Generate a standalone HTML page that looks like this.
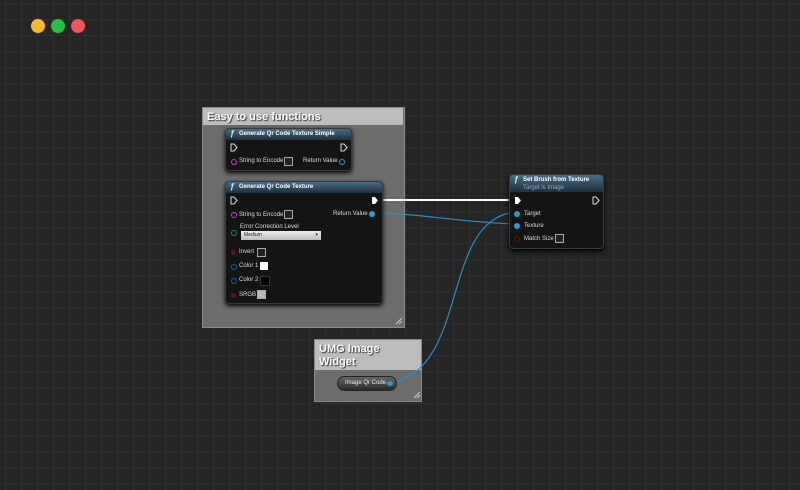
<!DOCTYPE html><html><head><style>
body{margin:0;width:800px;height:490px;overflow:hidden;background:#252525;font-family:"Liberation Sans",sans-serif;position:relative;
background-image:linear-gradient(#2e2e2e 1px,transparent 1px),linear-gradient(90deg,#2e2e2e 1px,transparent 1px);background-size:16px 16px;background-position:5px 3px}
.a{position:absolute}
.dot{width:14px;height:14px;border-radius:50%;top:19px}
.cm{background:#6c6c6c;border:1px solid #8a8a8a}
.ch{background:#bcbcbc;color:#fff;font-weight:bold;text-shadow:1px 1px 1px #333}
.node{background:#141414;border:1px solid #3a3a3a;border-radius:4px;box-shadow:0 2px 4px #000;font-size:6px;color:#ddd}
.nh{background:linear-gradient(#4a6c88,#1d2f3e);height:11px;border-radius:3px 3px 0 0;color:#fff;font-weight:bold;font-size:6px;padding-left:13px;line-height:10px;position:relative}
.nh:before{content:"ƒ";position:absolute;left:4px;top:0;font-style:italic;color:#cfe;font-size:8px}
.pin{width:5px;height:5px;border-radius:50%;position:absolute}
.cb{position:absolute;width:7px;height:7px;border:1px solid #aaa;background:#222}
.t{line-height:9px}
</style></head><body>
<div class="a dot" style="left:31px;background:#fbb82d"></div>
<div class="a dot" style="left:51px;background:#24c146"></div>
<div class="a dot" style="left:71px;background:#f05454"></div>

<div class="a cm" style="left:202px;top:107px;width:201px;height:219px"></div>
<div class="a ch" style="left:203px;top:108px;width:200px;height:17px;font-size:11px;line-height:18px;padding-left:4px;box-sizing:border-box">Easy to use functions</div>

<div class="a cm" style="left:314px;top:339px;width:106px;height:61px"></div>
<div class="a ch" style="left:315px;top:340px;width:106px;height:30px;font-size:11px;line-height:13px;padding:3px 4px;box-sizing:border-box">UMG Image<br>Widget</div>

<svg class="a" style="left:0;top:0" width="800" height="490">
<line x1="376" y1="200" x2="513" y2="200" stroke="#fff" stroke-width="2"/>
<path d="M372 212 C430 215,460 222,515 224" stroke="#2a8fc4" stroke-width="1.2" fill="none"/>
<path d="M390 383 C470 370,440 220,515 212" stroke="#2a8fc4" stroke-width="1.2" fill="none"/>
<path d="M396 324 L402 318 M399 324 L402 321" stroke="#ccc" stroke-width="1"/>
<path d="M414 398 L420 392 M417 398 L420 395" stroke="#ccc" stroke-width="1"/>
</svg>

<div class="a node" style="left:225px;top:128px;width:125px;height:41px">
<div class="nh">Generate Qr Code Texture Simple</div>
<svg class="a" style="left:4px;top:14px" width="120" height="10"><path d="M1 1H4L7 4.5L4 8H1Z" stroke="#ddd" fill="none"/><path d="M111 1H114L117 4.5L114 8H111Z" stroke="#ddd" fill="none"/></svg>
<div class="pin" style="left:5px;top:30px;border:1px solid #d23bd2;width:4px;height:4px"></div>
<div class="a t" style="left:13px;top:28px">String to Encode</div><div class="cb" style="left:58px;top:28px"></div>
<div class="a t" style="left:77px;top:28px">Return Value</div>
<div class="pin" style="left:113px;top:30px;border:1px solid #2a9ad8;width:4px;height:4px"></div>
</div>

<div class="a node" style="left:225px;top:181px;width:156px;height:121px">
<div class="nh">Generate Qr Code Texture</div>
<svg class="a" style="left:4px;top:14px" width="150" height="10"><path d="M1 1H4L7 4.5L4 8H1Z" stroke="#ddd" fill="none"/><path d="M142 1H145L148 4.5L145 8H142Z" fill="#fff"/></svg>
<div class="pin" style="left:5px;top:30px;border:1px solid #d23bd2;width:4px;height:4px"></div>
<div class="a t" style="left:13px;top:29px">String to Encode</div><div class="cb" style="left:58px;top:28px"></div>
<div class="a t" style="left:107px;top:28px">Return Value</div>
<div class="pin" style="left:143px;top:29px;background:#2a9ad8;width:6px;height:6px"></div>
<div class="pin" style="left:5px;top:48px;border:1px solid #1a8a6a;width:4px;height:4px"></div>
<div class="a t" style="left:14px;top:41px">Error Correction Level</div>
<div class="a" style="left:15px;top:49px;width:80px;height:9px;background:linear-gradient(#eee,#bbb);color:#222;font-size:5px;line-height:9px;padding-left:3px;box-sizing:border-box">Medium<span style="float:right;margin-right:3px">▾</span></div>
<div class="pin" style="left:5px;top:68px;background:#6a1010"></div><div class="a t" style="left:13px;top:66px">Invert</div><div class="cb" style="left:31px;top:66px"></div>
<div class="pin" style="left:5px;top:82px;border:1px solid #1a5aa8;width:4px;height:4px"></div><div class="a t" style="left:13px;top:80px">Color 1</div><div class="a" style="left:34px;top:80px;width:8px;height:8px;background:#fff"></div>
<div class="pin" style="left:5px;top:96px;border:1px solid #1a5aa8;width:4px;height:4px"></div><div class="a t" style="left:13px;top:94px">Color 2</div><div class="a" style="left:34px;top:94px;width:8px;height:8px;background:#000;border:1px solid #333"></div>
<div class="pin" style="left:5px;top:111px;background:#6a1010"></div><div class="a t" style="left:13px;top:109px">SRGB</div><div class="cb" style="left:31px;top:108px;background:#bbb"></div>
</div>

<div class="a node" style="left:509px;top:174px;width:93px;height:73px">
<div class="nh" style="height:17px">Set Brush from Texture<div style="font-weight:normal;color:#9ab;line-height:6px">Target is Image</div></div>
<svg class="a" style="left:4px;top:21px" width="90" height="10"><path d="M1 1H4L7 4.5L4 8H1Z" fill="#fff"/><path d="M79 1H82L85 4.5L82 8H79Z" stroke="#ddd" fill="none"/></svg>
<div class="pin" style="left:4px;top:36px;background:#2a9ad8;width:6px;height:6px"></div><div class="a t" style="left:14px;top:35px">Target</div>
<div class="pin" style="left:4px;top:48px;background:#2a9ad8;width:6px;height:6px"></div><div class="a t" style="left:14px;top:47px">Texture</div>
<div class="pin" style="left:4px;top:61px;border:1px solid #6a1010;width:4px;height:4px"></div><div class="a t" style="left:14px;top:60px">Match Size</div><div class="cb" style="left:45px;top:59px"></div>
</div>

<div class="a" style="left:337px;top:376px;width:60px;height:15px;border-radius:8px;background:linear-gradient(#666,#2a2a2a);border:1px solid #222;box-sizing:border-box;color:#eee;font-size:6px;line-height:13px;padding-left:7px;white-space:nowrap">Image Qr Code<span class="pin" style="left:49px;top:4px;background:#2a9ad8;width:6px;height:5px"></span></div>
</body></html>
